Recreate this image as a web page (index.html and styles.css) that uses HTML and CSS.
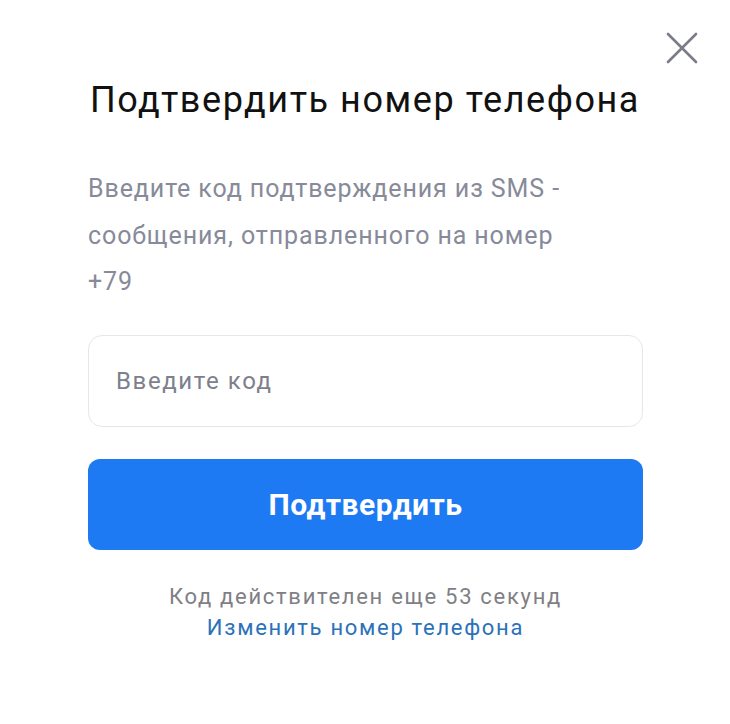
FILE: index.html
```html
<!DOCTYPE html>
<html lang="ru">
<head>
<meta charset="utf-8">
<link rel="stylesheet" href="styles.css">
</head>
<body>
<div class="modal">
  <button class="close" aria-label="Закрыть">
    <svg width="34" height="34" viewBox="0 0 34 34"><path d="M3 3 L31 31 M31 3 L3 31" stroke="#7a7d88" stroke-width="2.6" stroke-linecap="round" fill="none"/></svg>
  </button>
  <h1 class="title">Подтвердить номер телефона</h1>
  <p class="desc">Введите код подтверждения из SMS - сообщения, отправленного на номер<br>+79</p>
  <div class="field"><span class="placeholder">Введите код</span></div>
  <div class="btn">Подтвердить</div>
  <div class="foot">
    <div class="timer">Код действителен еще 53 секунд</div>
    <a class="link" href="#">Изменить номер телефона</a>
  </div>
</div>
</body>
</html>
```
FILE: styles.css
```css
html, body { margin: 0; padding: 0; background: #fff; }
body { font-family: Roboto, "Noto Sans", sans-serif; width: 730px; height: 724px; overflow: hidden; }
.modal { position: relative; padding: 76px 87px 0 88px; }
.close { position: absolute; top: 31px; left: 665px; width: 34px; height: 34px; padding: 0; border: 0; background: none; }
.close svg { display: block; }
.title { margin: 0 0 0 2px; font-weight: 400; font-size: 36px; line-height: 48px; color: #111; letter-spacing: 1.55px; white-space: nowrap; }
.desc { margin: 42px 0 0; width: 520px; font-size: 25px; line-height: 46.5px; color: #878a99; letter-spacing: 0.9px; }
.field { margin-top: 29px; height: 90px; border: 1px solid #e6e7eb; border-radius: 14px; display: flex; align-items: center; padding-left: 27px; }
.placeholder { font-size: 24px; color: #7d808c; letter-spacing: 1.6px; }
.btn { margin-top: 32px; height: 91px; border-radius: 12px; background: #1d7af3; color: #fff; font-weight: 700; font-size: 30px; letter-spacing: 0.5px; display: flex; align-items: center; justify-content: center; }
.foot { margin-top: 32px; text-align: center; }
.timer { font-size: 22px; line-height: 30px; color: #7f7f85; letter-spacing: 1.7px; }
.link { font-size: 22px; line-height: 32px; color: #2c72b9; text-decoration: none; letter-spacing: 1.7px; }
```
